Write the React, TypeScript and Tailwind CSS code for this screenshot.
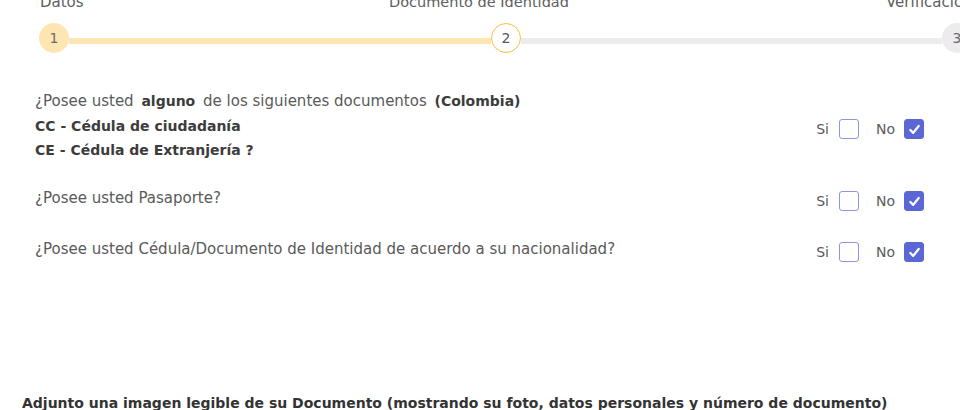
import { useState } from "react";

const font = { fontFamily: '"DejaVu Sans", "Noto Sans", sans-serif' };

const Check = ({ checked, onClick }: { checked: boolean; onClick: () => void }) => (
  <button
    onClick={onClick}
    className={`w-[20px] h-[20px] rounded-[3px] flex items-center justify-center ${
      checked ? "bg-[#5c67d6] border border-[#5c67d6]" : "bg-white border border-[#8d96e6]"
    }`}
  >
    {checked && (
      <svg width="13" height="13" viewBox="0 0 14 14">
        <path d="M2.5 7.5 L5.6 10.6 L11.5 3.2" fill="none" stroke="#fff" strokeWidth="2.4" strokeLinecap="round" strokeLinejoin="round" />
      </svg>
    )}
  </button>
);

const YesNo = ({ value, onChange }: { value: boolean; onChange: (v: boolean) => void }) => (
  <div className="flex items-center mt-[7px] text-[14px] text-[#5a5a5a] shrink-0">
    <span className="mr-[10px]">Si</span>
    <Check checked={value} onClick={() => onChange(true)} />
    <span className="ml-[17px] mr-[9px]">No</span>
    <Check checked={!value} onClick={() => onChange(false)} />
  </div>
);

const App = () => {
  const [answers, setAnswers] = useState([false, false, false]);

  const setAnswer = (i: number, v: boolean) => {
    const next = [...answers];
    next[i] = v;
    setAnswers(next);
  };

  return (
    <div className="w-[960px] h-[410px] overflow-hidden bg-white" style={font}>
      {/* Stepper labels */}
      <div className="grid grid-cols-[349px_497px_auto] pl-[40px] mt-[-8px] h-[20px] text-[15px] leading-[20px] text-[#5e5e5e] whitespace-nowrap">
        <span>Datos</span>
        <span className="text-[14.5px]">Documento de Identidad</span>
        <span>Verificación</span>
      </div>

      {/* Stepper bar */}
      <div className="flex items-center mt-[11px] pl-[39px] w-[1000px]">
        <div className="w-[30px] h-[30px] rounded-full bg-[#fde6b2] flex items-center justify-center text-[14px] text-[#6b6b6b] shrink-0">
          1
        </div>
        <div className="h-[6px] w-[422px] bg-[#fde6b2] mt-[5px]" />
        <div className="w-[30px] h-[30px] rounded-full bg-white border border-[#f9bd3f] flex items-center justify-center text-[14px] text-[#555] shrink-0">
          2
        </div>
        <div className="h-[6px] w-[421px] bg-[#ececee] mt-[5px]" />
        <div className="w-[30px] h-[30px] rounded-full bg-[#ececee] flex items-center justify-center text-[14px] text-[#6b6b6b] shrink-0">
          3
        </div>
      </div>

      {/* Questions */}
      <div className="pl-[35px] pr-[36px] mt-[36px] text-[15px] text-[#5a5a5a]">
        <div className="flex justify-between items-center">
          <div className="leading-[24.5px]">
            <div>
              ¿Posee usted <b className="text-[14px] text-[#3c3c3c] mx-[3px]">alguno</b> de los siguientes documentos{" "}
              <b className="text-[14px] text-[#3c3c3c] ml-[3px]">(Colombia)</b>
            </div>
            <div className="text-[14px] font-bold text-[#3c3c3c]">CC - Cédula de ciudadanía</div>
            <div className="text-[14px] font-bold text-[#3c3c3c]">CE - Cédula de Extranjería ?</div>
          </div>
          <YesNo value={answers[0]} onChange={(v) => setAnswer(0, v)} />
        </div>

        <div className="flex justify-between items-center mt-[21px]">
          <div className="leading-[24px]">¿Posee usted Pasaporte?</div>
          <YesNo value={answers[1]} onChange={(v) => setAnswer(1, v)} />
        </div>

        <div className="flex justify-between items-center mt-[23px]">
          <div className="leading-[24px]">¿Posee usted Cédula/Documento de Identidad de acuerdo a su nacionalidad?</div>
          <YesNo value={answers[2]} onChange={(v) => setAnswer(2, v)} />
        </div>
      </div>

      {/* Upload title */}
      <div className="pl-[22px] mt-[130px] text-[14px] leading-[20px] font-bold text-[#333] whitespace-nowrap">
        Adjunto una imagen legible de su Documento (mostrando su foto, datos personales y número de documento)
      </div>
    </div>
  );
};

export default App;
